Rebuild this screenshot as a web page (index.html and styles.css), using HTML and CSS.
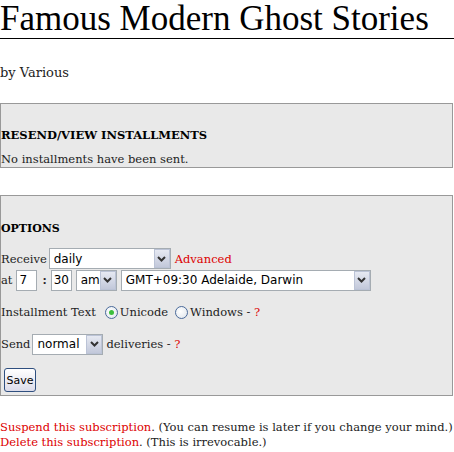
FILE: index.html
```html
<!DOCTYPE html>
<html>
<head>
<meta charset="utf-8">
<link rel="stylesheet" href="styles.css">
</head>
<body>
<h1 class="title">Famous Modern Ghost Stories</h1>
<p class="byline">by Various</p>

<div class="panel panel-resend">
  <h3 class="panel-title">RESEND/VIEW INSTALLMENTS</h3>
  <p class="panel-text">No installments have been sent.</p>
</div>

<div class="panel panel-options">
  <h3 class="panel-title">OPTIONS</h3>
  <div class="row row-receive">
    <span class="label">Receive</span>
    <span class="sel sel-freq"><select><option>daily</option></select><span class="arrow"><svg width="9" height="6" viewBox="0 0 9 6"><path d="M1 1 L4.5 4.5 L8 1" fill="none" stroke="#333" stroke-width="2"/></svg></span></span>
    <a class="red" href="#">Advanced</a>
  </div>
  <div class="row row-at">
    <span class="label">at</span>
    <input class="num num-h" type="text" value="7">
    <span class="colon">:</span>
    <input class="num num-m" type="text" value="30">
    <span class="sel sel-ampm"><select><option>am</option></select><span class="arrow"><svg width="9" height="6" viewBox="0 0 9 6"><path d="M1 1 L4.5 4.5 L8 1" fill="none" stroke="#333" stroke-width="2"/></svg></span></span>
    <span class="sel sel-tz"><select><option>GMT+09:30 Adelaide, Darwin</option></select><span class="arrow"><svg width="9" height="6" viewBox="0 0 9 6"><path d="M1 1 L4.5 4.5 L8 1" fill="none" stroke="#333" stroke-width="2"/></svg></span></span>
  </div>
  <div class="row row-text">
    <span class="label">Installment Text</span>
    <span class="radio radio-on"></span><span class="rlabel">Unicode</span>
    <span class="radio"></span><span class="rlabel">Windows - <a class="red" href="#">?</a></span>
  </div>
  <div class="row row-send">
    <span class="label">Send</span>
    <span class="sel sel-send"><select><option>normal</option></select><span class="arrow"><svg width="9" height="6" viewBox="0 0 9 6"><path d="M1 1 L4.5 4.5 L8 1" fill="none" stroke="#333" stroke-width="2"/></svg></span></span>
    <span class="label">deliveries - <a class="red" href="#">?</a></span>
  </div>
  <div class="row row-save">
    <button class="save" type="button">Save</button>
  </div>
</div>

<div class="footer">
  <div><a class="red" href="#">Suspend this subscription</a>. (You can resume is later if you change your mind.)</div>
  <div><a class="red" href="#">Delete this subscription</a>. (This is irrevocable.)</div>
</div>
</body>
</html>
```

FILE: styles.css
```css
html, body {
  margin: 0;
  padding: 0;
  background: #fff;
}
body {
  font-family: "DejaVu Serif", serif;
  font-size: 11.5px;
  color: #222;
}
.title {
  margin: 0;
  font-family: "Liberation Serif", serif;
  font-weight: normal;
  font-size: 35px;
  line-height: 38px;
  height: 38px;
  color: #000;
  border-bottom: 1px solid #000;
  white-space: nowrap;
}
.byline {
  margin: 0;
  padding-top: 24px;
  line-height: 20px;
  font-size: 13px;
}
.panel {
  background: #e9e9e9;
  border: 1px solid #999;
  width: 451px;
}
.panel-resend {
  margin-top: 20px;
  height: 63px;
}
.panel-title {
  margin: 0;
  padding-top: 23px;
  font-size: 11.5px;
  font-weight: bold;
  line-height: 16px;
  color: #000;
}
.panel-options .panel-title {
  font-size: 11px;
  padding-top: 25px;
}
.panel-text {
  margin: 9px 0 0 0;
  line-height: 14px;
}
.panel-options {
  margin-top: 27px;
  height: 199px;
}
.row {
  display: flex;
  align-items: center;
  white-space: nowrap;
}
.row-receive {
  margin-top: 11px;
  height: 21px;
}
.row-at {
  height: 22px;
}
.red {
  color: #d00;
  text-decoration: none;
}
.label { margin-right: 3px; }
.sel {
  position: relative;
  display: inline-block;
  height: 21px;
  margin-right: 4px;
}
.sel select {
  -webkit-appearance: none;
  appearance: none;
  box-sizing: border-box;
  height: 21px;
  border: 1px solid #a5acb2;
  background: #fff;
  font-family: "DejaVu Sans", sans-serif;
  font-size: 12px;
  color: #000;
  padding: 0 0 0 4px;
  margin: 0;
  border-radius: 0;
}
.arrow {
  position: absolute;
  right: 1px;
  top: 1px;
  width: 16px;
  height: 19px;
  box-sizing: border-box;
  border: 1px solid #bbc3d6;
  background: linear-gradient(#e6e9f2, #c2c8da);
  display: flex;
  align-items: center;
  justify-content: center;
}
.sel-freq select { width: 122px; }
.sel-ampm select { width: 41px; }
.sel-tz select { width: 250px; }
.sel-send select { width: 71px; }
.row-receive .label { margin-right: 2px; }
.num {
  box-sizing: border-box;
  height: 21px;
  width: 21px;
  border: 1px solid #a5acb2;
  background: #fff;
  font-family: "DejaVu Sans", sans-serif;
  font-size: 12px;
  padding: 0 2px;
  margin: 0;
}
.num-h { margin-left: 1px; }
.colon { margin: 0 4px 0 5px; font-weight: bold; }
.num-m { margin-right: 4px; }
.row-text {
  margin-top: 10px;
  height: 22px;
}
.row-text .label { margin-right: 9px; }
.radio {
  display: inline-block;
  box-sizing: border-box;
  width: 13px;
  height: 13px;
  border-radius: 50%;
  border: 1px solid #4a6a9a;
  background: radial-gradient(circle at 40% 40%, #fff, #dde3ea);
  margin-right: 2px;
  position: relative;
}
.radio-on::after {
  content: "";
  position: absolute;
  left: 3px;
  top: 3px;
  width: 5px;
  height: 5px;
  border-radius: 50%;
  background: #3cbe3c;
}
.rlabel { margin-right: 7px; }
.row-send {
  margin-top: 10px;
  height: 22px;
}
.row-send .label { margin-right: 2px; }
.row-send .sel { margin-right: 3px; }
.row-save {
  margin-top: 13px;
  padding-left: 3px;
}
.save {
  box-sizing: border-box;
  width: 32px;
  height: 24px;
  border: 1px solid #2f4f7f;
  border-radius: 3px;
  background: linear-gradient(#fff, #dcdcea);
  font-family: "DejaVu Sans", sans-serif;
  font-size: 11px;
  padding: 0;
  color: #000;
}
.footer {
  margin-top: 24px;
  line-height: 15px;
  white-space: nowrap;
}
```
